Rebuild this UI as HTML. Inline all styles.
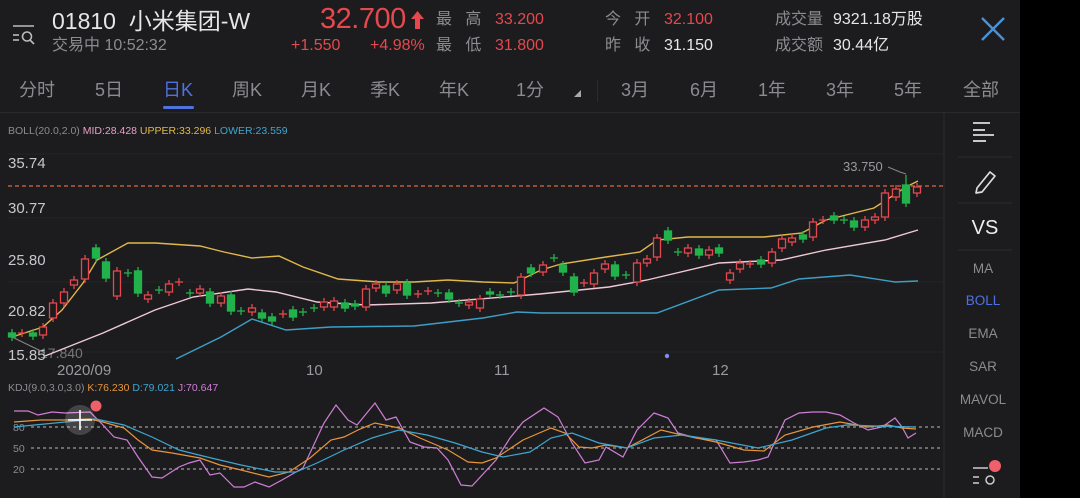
<!DOCTYPE html>
<html><head><meta charset="utf-8">
<style>
*{margin:0;padding:0;box-sizing:border-box}
body{width:1080px;height:498px;background:#000;overflow:hidden;font-family:"Liberation Sans","Noto Sans CJK SC",sans-serif;position:relative}
#app{position:absolute;left:0;top:0;width:1020px;height:498px;background:#1c1c1e}
.t{position:absolute;white-space:nowrap;line-height:1}
.g{color:#8c8c90}.w{color:#e6e6e8}.r{color:#e5484d}
</style></head><body>
<div id="app">
<svg width="40" height="40" style="position:absolute;left:8px;top:18px" viewBox="0 0 40 40">
<line x1="5" y1="8" x2="26" y2="8" stroke="#bbb" stroke-width="1.6"/>
<line x1="5" y1="17" x2="11" y2="17" stroke="#bbb" stroke-width="1.6"/>
<line x1="5" y1="22" x2="11" y2="22" stroke="#bbb" stroke-width="1.6"/>
<circle cx="19" cy="18.5" r="4.5" fill="none" stroke="#bbb" stroke-width="1.6"/>
<line x1="22" y1="22" x2="26" y2="26" stroke="#bbb" stroke-width="1.6"/>
</svg>
<div class="t w" style="left:52px;top:10px;font-size:23px">01810&nbsp; 小米集团-W</div>
<div class="t g" style="left:52px;top:38px;font-size:16px">交易中 10:52:32</div>
<div class="t r" style="left:320px;top:5px;font-size:29px;letter-spacing:-0.5px">32.700</div>
<svg style="position:absolute;left:410px;top:10px" width="16" height="20"><path d="M7.5 1 L14 9 L10 9 L10 19 L5 19 L5 9 L1 9 Z" fill="#e5484d"/></svg>
<div class="t r" style="left:291px;top:38px;font-size:16px">+1.550</div>
<div class="t r" style="left:370px;top:38px;font-size:16px">+4.98%</div>
<div class="t g" style="left:436px;top:12px;font-size:16px">最&nbsp;&nbsp;&nbsp;高</div>
<div class="t g" style="left:436px;top:38px;font-size:16px">最&nbsp;&nbsp;&nbsp;低</div>
<div class="t r" style="left:495px;top:12px;font-size:16px">33.200</div>
<div class="t r" style="left:495px;top:38px;font-size:16px">31.800</div>
<div class="t g" style="left:605px;top:12px;font-size:16px">今&nbsp;&nbsp;&nbsp;开</div>
<div class="t g" style="left:605px;top:38px;font-size:16px">昨&nbsp;&nbsp;&nbsp;收</div>
<div class="t r" style="left:664px;top:12px;font-size:16px">32.100</div>
<div class="t w" style="left:664px;top:38px;font-size:16px">31.150</div>
<div class="t g" style="left:775px;top:12px;font-size:16px">成交量</div>
<div class="t g" style="left:775px;top:38px;font-size:16px">成交额</div>
<div class="t w" style="left:833px;top:12px;font-size:16px">9321.18万股</div>
<div class="t w" style="left:833px;top:38px;font-size:16px">30.44亿</div>
<svg style="position:absolute;left:980px;top:16px" width="26" height="26"><path d="M2 2 L24 24 M24 2 L2 24" stroke="#4a90d9" stroke-width="2.4"/></svg>

<div class="t g" style="left:19px;top:81px;font-size:18px">分时</div>
<div class="t g" style="left:95px;top:81px;font-size:18px">5日</div>
<div class="t" style="left:163px;top:81px;font-size:18px;color:#4f72e0">日K</div>
<div style="position:absolute;left:163px;top:106px;width:31px;height:3px;background:#4f72e0;border-radius:2px"></div>
<div class="t g" style="left:232px;top:81px;font-size:18px">周K</div>
<div class="t g" style="left:301px;top:81px;font-size:18px">月K</div>
<div class="t g" style="left:370px;top:81px;font-size:18px">季K</div>
<div class="t g" style="left:439px;top:81px;font-size:18px">年K</div>
<div class="t g" style="left:516px;top:81px;font-size:18px">1分</div>
<svg style="position:absolute;left:573px;top:89px" width="10" height="10"><path d="M1 8 L8 8 L8 1 Z" fill="#aaa"/></svg>
<div style="position:absolute;left:597px;top:80px;width:1px;height:22px;background:#2c2c2e"></div>
<div class="t g" style="left:621px;top:81px;font-size:18px">3月</div>
<div class="t g" style="left:690px;top:81px;font-size:18px">6月</div>
<div class="t g" style="left:758px;top:81px;font-size:18px">1年</div>
<div class="t g" style="left:826px;top:81px;font-size:18px">3年</div>
<div class="t g" style="left:894px;top:81px;font-size:18px">5年</div>
<div class="t g" style="left:963px;top:81px;font-size:18px">全部</div>
<div style="position:absolute;left:0;top:112px;width:1020px;height:1px;background:#2a2a2c"></div>

<div class="t" style="left:8px;top:126px;font-size:10.5px;color:#8c8c90">BOLL(20.0,2.0) <span style="color:#e7a0c8">MID:28.428</span> <span style="color:#e0b84a">UPPER:33.296</span> <span style="color:#3fa6d0">LOWER:23.559</span></div>
<div class="t" style="left:8px;top:383px;font-size:10.5px;color:#8c8c90">KDJ(9.0,3.0,3.0) <span style="color:#e8943a">K:76.230</span> <span style="color:#3fa6d0">D:79.021</span> <span style="color:#cf7fd6">J:70.647</span></div>

<svg style="position:absolute;left:0;top:0" width="1020" height="498">
<g stroke="#232325" stroke-width="1">
<line x1="8" y1="154" x2="944" y2="154"/><line x1="8" y1="218" x2="944" y2="218"/><line x1="8" y1="282" x2="944" y2="282"/><line x1="8" y1="352" x2="944" y2="352"/>
</g>
<line x1="8" y1="186" x2="944" y2="186" stroke="#d9683a" stroke-width="1.2" stroke-dasharray="4,3"/>
<g font-size="15" fill="#c8c8cc" font-family="Liberation Sans">
<text x="8" y="168">35.74</text><text x="8" y="213">30.77</text><text x="8" y="265">25.80</text><text x="8" y="316">20.82</text>
<text x="40" y="358" fill="#77777b" font-size="14">17.840</text>
<text x="8" y="360">15.85</text>
</g>
<g font-size="15" fill="#9a9a9e" font-family="Liberation Sans">
<text x="57" y="375">2020/09</text><text x="306" y="375">10</text><text x="494" y="375">11</text><text x="712" y="375">12</text>
<text x="843" y="171" font-size="13">33.750</text>
</g>
<polyline points="12,337 45,353" fill="none" stroke="#888" stroke-width="1"/>
<polyline points="888,167 900,172 906,174" fill="none" stroke="#888" stroke-width="1"/>
<circle cx="667" cy="356" r="2.2" fill="#7b8ef0"/>
<polyline fill="none" stroke="#e0b84a" stroke-width="1.4" points="12,337 43,327 62,310 83,283 97,260 128,243 155,243 200,246 224,252 252,258 279,256 303,267 338,279 379,282 414,282 448,280 483,282 514,283 541,270 561,264 606,257 640,252 657,240 688,237 764,237 802,233 826,220 874,208 906,187 918,181"/>
<polyline fill="none" stroke="#efc8d8" stroke-width="1.4" points="45,356 103,333 155,310 193,297 248,289 276,292 317,302 366,305 431,303 540,294 609,287 647,280 719,263 781,260 826,250 885,240 918,230"/>
<polyline fill="none" stroke="#3c9fc6" stroke-width="1.4" points="176,359 221,337 252,319 286,330 331,327 414,326 483,318 517,312 541,313 657,313 719,290 771,288 799,279 850,275 895,282 918,281"/>
<g id="c" stroke-width="1.3"></g>
<g stroke="#9a9a9e" stroke-width="1.2" stroke-dasharray="3,3">
<line x1="31" y1="427" x2="940" y2="427"/><line x1="31" y1="448" x2="940" y2="448"/><line x1="31" y1="469" x2="940" y2="469"/>
</g>
<g font-size="10.5" fill="#8c8c90" font-family="Liberation Sans"><text x="13" y="431">80</text><text x="13" y="452">50</text><text x="13" y="473">20</text></g>
<polyline fill="none" stroke="#cf7fd6" stroke-width="1.2" points="14,411 28,411 38,415 52,412 65,413 90,412 103,425 114,437 127,440 138,457 152,477 162,478 179,467 189,463 200,460 210,475 220,473 234,487 244,487 255,482 269,487 282,480 303,468 324,423 336,405 348,420 357,425 375,403 386,420 396,417 410,442 424,447 437,448 448,460 461,485 472,486 496,460 510,438 523,422 544,408 558,417 572,443 585,463 599,460 606,447 623,457 637,430 654,413 668,418 678,433 696,438 716,440 730,463 744,462 758,460 768,457 785,420 799,413 813,412 826,412 840,415 854,423 868,430 882,427 895,418 902,427 908,438 916,433"/>
<polyline fill="none" stroke="#e8943a" stroke-width="1.2" points="14,422 41,420 65,420 90,419 103,422 124,428 138,440 152,450 172,453 200,458 220,465 241,470 269,477 289,472 310,458 331,440 344,437 358,430 375,423 399,428 420,438 448,450 468,462 482,463 496,458 523,440 551,428 565,433 579,447 592,448 606,445 627,448 661,430 682,435 716,442 744,450 764,451 785,435 813,427 840,422 868,427 888,425 902,428 916,429"/>
<polyline fill="none" stroke="#3fa6d0" stroke-width="1.2" points="14,427 55,423 96,419 124,425 152,437 179,450 207,457 241,465 275,472 296,472 317,463 344,450 372,438 399,430 427,435 455,443 482,452 503,457 530,452 551,438 572,433 599,443 627,448 654,438 682,435 716,440 758,448 792,440 826,428 847,425 875,426 916,427"/>
<circle cx="80" cy="420" r="15" fill="#ffffff" fill-opacity="0.18"/>
<path d="M68 420 H92 M80 410 V430" stroke="#fff" stroke-width="1.6"/>
<circle cx="96" cy="406" r="5.5" fill="#f0606a"/>
<line x1="944" y1="113" x2="944" y2="498" stroke="#2c2c2e"/>
<g stroke="#2c2c2e"><line x1="958" y1="157" x2="1012" y2="157"/><line x1="958" y1="203" x2="1012" y2="203"/><line x1="958" y1="250" x2="1012" y2="250"/></g>
<g stroke="#ddd" stroke-width="1.8"><line x1="973" y1="123" x2="990" y2="123"/><line x1="973" y1="130" x2="985" y2="130"/><line x1="973" y1="135" x2="994" y2="135"/><line x1="973" y1="141" x2="986" y2="141"/></g>
<path d="M977 188 L990 172 L995 176 L982 192 L976 193 Z" fill="none" stroke="#ddd" stroke-width="1.7" stroke-linejoin="round"/>
<g font-family="Liberation Sans" text-anchor="middle">
<text x="985" y="234" font-size="20" fill="#eee">VS</text>
<text x="983" y="273" font-size="13.5" fill="#8c8c90">MA</text>
<text x="983" y="305" font-size="13.5" fill="#4f72e0">BOLL</text>
<text x="983" y="338" font-size="13.5" fill="#8c8c90">EMA</text>
<text x="983" y="371" font-size="13.5" fill="#8c8c90">SAR</text>
<text x="983" y="404" font-size="13.5" fill="#8c8c90">MAVOL</text>
<text x="983" y="437" font-size="13.5" fill="#8c8c90">MACD</text>
</g>
<g stroke="#ccc" stroke-width="1.5" fill="none"><line x1="973" y1="468" x2="988" y2="468"/><line x1="973" y1="477" x2="979" y2="477"/><line x1="973" y1="483" x2="979" y2="483"/><circle cx="990" cy="480" r="4"/></g>
<circle cx="995" cy="466" r="6" fill="#f0606a"/>
</svg>
</div>
<script>
var R='#e5484d',G='#22b24c';
var d=[[12,333,337,G],[22,333,333,R],[33,333,336,G],[43,327,335,R],[53,303,318,R],[64,292,303,R],[74,280,285,R],[85,259,279,R],[96,248,258,G],[106,262,278,G],[117,271,296,R],[128,273,273,G],[138,271,293,G],[148,295,299,R],[159,290,290,G],[169,284,292,R],[179,282,282,R],[190,293,293,G],[200,289,293,R],[210,292,303,G],[221,296,303,R],[231,295,311,G],[241,311,311,G],[252,308,312,R],[262,313,318,G],[272,317,321,G],[283,314,314,R],[293,310,317,G],[303,312,312,G],[314,308,308,G],[324,302,307,R],[334,301,307,R],[345,303,308,G],[355,304,306,G],[366,289,307,R],[376,284,288,R],[386,286,293,G],[397,284,290,R],[407,283,295,G],[418,294,294,R],[428,291,291,R],[438,293,293,G],[449,293,299,G],[459,303,303,G],[469,302,305,R],[480,299,308,R],[490,292,294,G],[500,295,295,G],[511,292,292,G],[521,277,295,R],[531,268,273,G],[543,265,272,R],[554,258,258,G],[563,265,272,G],[574,277,292,G],[584,283,283,R],[594,273,284,R],[605,264,269,R],[615,265,276,G],[626,275,275,G],[637,263,282,R],[647,259,263,R],[657,238,257,R],[668,231,240,G],[678,252,252,G],[688,248,253,R],[699,249,255,G],[709,250,255,R],[719,248,253,G],[730,273,280,R],[740,263,269,R],[750,264,264,R],[761,260,264,G],[772,252,263,R],[782,239,248,R],[792,238,242,R],[803,235,239,G],[813,222,237,R],[823,220,220,R],[834,216,220,G],[844,220,220,G],[854,221,227,G],[865,220,227,R],[875,217,220,R],[885,193,217,R],[896,189,197,R],[906,185,203,G],[917,187,193,R]];
var s='';d.forEach(function(c){var x=c[0],t=c[1],b=c[2],col=c[3];var hi=t-4,lo=b+4;if(c[0]==906){hi=175;}
s+='<line x1="'+x+'" y1="'+hi+'" x2="'+x+'" y2="'+lo+'" stroke="'+col+'"/>';
if(b-t<2){s+='<line x1="'+(x-4)+'" y1="'+t+'" x2="'+(x+4)+'" y2="'+t+'" stroke="'+col+'"/>';}
else if(col==R){s+='<rect x="'+(x-3.5)+'" y="'+t+'" width="7" height="'+(b-t)+'" fill="#1c1c1e" stroke="'+col+'"/>';}
else{s+='<rect x="'+(x-3.5)+'" y="'+t+'" width="7" height="'+(b-t)+'" fill="'+col+'" stroke="'+col+'"/>';}});
document.getElementById('c').innerHTML=s;
</script>
</body></html>
